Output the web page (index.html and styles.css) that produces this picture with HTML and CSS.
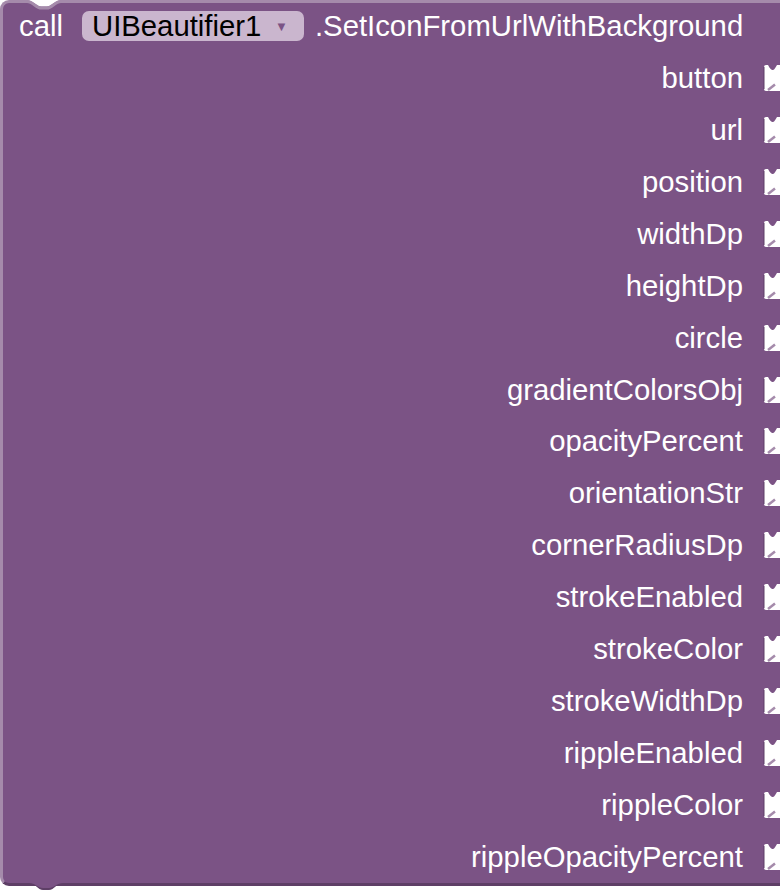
FILE: index.html
```html
<!DOCTYPE html>
<html>
<head>
<meta charset="utf-8">
<link rel="stylesheet" href="styles.css">
</head>
<body>
<div class="block">
  <svg class="notch-top" width="34" height="10" viewBox="0 0 34 10"><path d="M0,0 C6,0 9,6.5 14,6.5 L20,6.5 C25,6.5 28,0 34,0 Z" fill="#ffffff"/><path d="M0,1.5 C6,1.5 9,8 14,8 L20,8 C25,8 28,1.5 34,1.5" fill="none" stroke="#a58bab" stroke-width="3"/></svg>
  <div class="row head">
    <span class="call">call</span>
    <span class="dd">UIBeautifier1<span class="arrow">▼</span></span>
    <span class="method">.SetIconFromUrlWithBackground</span>
  </div>
  <div class="row"><span class="label">button</span><svg class="socket" viewBox="0 0 17 26"><path d="M3,0 L5,0 C7,4 8.5,5 10,5 C11.5,5 12.5,2 14,0 L17,0 L17,26 L3,26 Q1,26 1,24 L1,2 Q1,0 3,0 Z" fill="#fff"/><path d="M1,2 L1,24" stroke="#5e3f66" stroke-width="1"/><path d="M5,25 L12,19.5" stroke="#a58bab" stroke-width="2.5"/></svg></div>
  <div class="row"><span class="label">url</span><svg class="socket" viewBox="0 0 17 26"><path d="M3,0 L5,0 C7,4 8.5,5 10,5 C11.5,5 12.5,2 14,0 L17,0 L17,26 L3,26 Q1,26 1,24 L1,2 Q1,0 3,0 Z" fill="#fff"/><path d="M1,2 L1,24" stroke="#5e3f66" stroke-width="1"/><path d="M5,25 L12,19.5" stroke="#a58bab" stroke-width="2.5"/></svg></div>
  <div class="row"><span class="label">position</span><svg class="socket" viewBox="0 0 17 26"><path d="M3,0 L5,0 C7,4 8.5,5 10,5 C11.5,5 12.5,2 14,0 L17,0 L17,26 L3,26 Q1,26 1,24 L1,2 Q1,0 3,0 Z" fill="#fff"/><path d="M1,2 L1,24" stroke="#5e3f66" stroke-width="1"/><path d="M5,25 L12,19.5" stroke="#a58bab" stroke-width="2.5"/></svg></div>
  <div class="row"><span class="label">widthDp</span><svg class="socket" viewBox="0 0 17 26"><path d="M3,0 L5,0 C7,4 8.5,5 10,5 C11.5,5 12.5,2 14,0 L17,0 L17,26 L3,26 Q1,26 1,24 L1,2 Q1,0 3,0 Z" fill="#fff"/><path d="M1,2 L1,24" stroke="#5e3f66" stroke-width="1"/><path d="M5,25 L12,19.5" stroke="#a58bab" stroke-width="2.5"/></svg></div>
  <div class="row"><span class="label">heightDp</span><svg class="socket" viewBox="0 0 17 26"><path d="M3,0 L5,0 C7,4 8.5,5 10,5 C11.5,5 12.5,2 14,0 L17,0 L17,26 L3,26 Q1,26 1,24 L1,2 Q1,0 3,0 Z" fill="#fff"/><path d="M1,2 L1,24" stroke="#5e3f66" stroke-width="1"/><path d="M5,25 L12,19.5" stroke="#a58bab" stroke-width="2.5"/></svg></div>
  <div class="row"><span class="label">circle</span><svg class="socket" viewBox="0 0 17 26"><path d="M3,0 L5,0 C7,4 8.5,5 10,5 C11.5,5 12.5,2 14,0 L17,0 L17,26 L3,26 Q1,26 1,24 L1,2 Q1,0 3,0 Z" fill="#fff"/><path d="M1,2 L1,24" stroke="#5e3f66" stroke-width="1"/><path d="M5,25 L12,19.5" stroke="#a58bab" stroke-width="2.5"/></svg></div>
  <div class="row"><span class="label">gradientColorsObj</span><svg class="socket" viewBox="0 0 17 26"><path d="M3,0 L5,0 C7,4 8.5,5 10,5 C11.5,5 12.5,2 14,0 L17,0 L17,26 L3,26 Q1,26 1,24 L1,2 Q1,0 3,0 Z" fill="#fff"/><path d="M1,2 L1,24" stroke="#5e3f66" stroke-width="1"/><path d="M5,25 L12,19.5" stroke="#a58bab" stroke-width="2.5"/></svg></div>
  <div class="row"><span class="label">opacityPercent</span><svg class="socket" viewBox="0 0 17 26"><path d="M3,0 L5,0 C7,4 8.5,5 10,5 C11.5,5 12.5,2 14,0 L17,0 L17,26 L3,26 Q1,26 1,24 L1,2 Q1,0 3,0 Z" fill="#fff"/><path d="M1,2 L1,24" stroke="#5e3f66" stroke-width="1"/><path d="M5,25 L12,19.5" stroke="#a58bab" stroke-width="2.5"/></svg></div>
  <div class="row"><span class="label">orientationStr</span><svg class="socket" viewBox="0 0 17 26"><path d="M3,0 L5,0 C7,4 8.5,5 10,5 C11.5,5 12.5,2 14,0 L17,0 L17,26 L3,26 Q1,26 1,24 L1,2 Q1,0 3,0 Z" fill="#fff"/><path d="M1,2 L1,24" stroke="#5e3f66" stroke-width="1"/><path d="M5,25 L12,19.5" stroke="#a58bab" stroke-width="2.5"/></svg></div>
  <div class="row"><span class="label">cornerRadiusDp</span><svg class="socket" viewBox="0 0 17 26"><path d="M3,0 L5,0 C7,4 8.5,5 10,5 C11.5,5 12.5,2 14,0 L17,0 L17,26 L3,26 Q1,26 1,24 L1,2 Q1,0 3,0 Z" fill="#fff"/><path d="M1,2 L1,24" stroke="#5e3f66" stroke-width="1"/><path d="M5,25 L12,19.5" stroke="#a58bab" stroke-width="2.5"/></svg></div>
  <div class="row"><span class="label">strokeEnabled</span><svg class="socket" viewBox="0 0 17 26"><path d="M3,0 L5,0 C7,4 8.5,5 10,5 C11.5,5 12.5,2 14,0 L17,0 L17,26 L3,26 Q1,26 1,24 L1,2 Q1,0 3,0 Z" fill="#fff"/><path d="M1,2 L1,24" stroke="#5e3f66" stroke-width="1"/><path d="M5,25 L12,19.5" stroke="#a58bab" stroke-width="2.5"/></svg></div>
  <div class="row"><span class="label">strokeColor</span><svg class="socket" viewBox="0 0 17 26"><path d="M3,0 L5,0 C7,4 8.5,5 10,5 C11.5,5 12.5,2 14,0 L17,0 L17,26 L3,26 Q1,26 1,24 L1,2 Q1,0 3,0 Z" fill="#fff"/><path d="M1,2 L1,24" stroke="#5e3f66" stroke-width="1"/><path d="M5,25 L12,19.5" stroke="#a58bab" stroke-width="2.5"/></svg></div>
  <div class="row"><span class="label">strokeWidthDp</span><svg class="socket" viewBox="0 0 17 26"><path d="M3,0 L5,0 C7,4 8.5,5 10,5 C11.5,5 12.5,2 14,0 L17,0 L17,26 L3,26 Q1,26 1,24 L1,2 Q1,0 3,0 Z" fill="#fff"/><path d="M1,2 L1,24" stroke="#5e3f66" stroke-width="1"/><path d="M5,25 L12,19.5" stroke="#a58bab" stroke-width="2.5"/></svg></div>
  <div class="row"><span class="label">rippleEnabled</span><svg class="socket" viewBox="0 0 17 26"><path d="M3,0 L5,0 C7,4 8.5,5 10,5 C11.5,5 12.5,2 14,0 L17,0 L17,26 L3,26 Q1,26 1,24 L1,2 Q1,0 3,0 Z" fill="#fff"/><path d="M1,2 L1,24" stroke="#5e3f66" stroke-width="1"/><path d="M5,25 L12,19.5" stroke="#a58bab" stroke-width="2.5"/></svg></div>
  <div class="row"><span class="label">rippleColor</span><svg class="socket" viewBox="0 0 17 26"><path d="M3,0 L5,0 C7,4 8.5,5 10,5 C11.5,5 12.5,2 14,0 L17,0 L17,26 L3,26 Q1,26 1,24 L1,2 Q1,0 3,0 Z" fill="#fff"/><path d="M1,2 L1,24" stroke="#5e3f66" stroke-width="1"/><path d="M5,25 L12,19.5" stroke="#a58bab" stroke-width="2.5"/></svg></div>
  <div class="row"><span class="label">rippleOpacityPercent</span><svg class="socket" viewBox="0 0 17 26"><path d="M3,0 L5,0 C7,4 8.5,5 10,5 C11.5,5 12.5,2 14,0 L17,0 L17,26 L3,26 Q1,26 1,24 L1,2 Q1,0 3,0 Z" fill="#fff"/><path d="M1,2 L1,24" stroke="#5e3f66" stroke-width="1"/><path d="M5,25 L12,19.5" stroke="#a58bab" stroke-width="2.5"/></svg></div>
  <svg class="tab-bottom" width="34" height="9" viewBox="0 0 34 9"><path d="M0,0 C6,0 9,7 14,7 L20,7 C25,7 28,0 34,0 Z" fill="#5e3f66"/><path d="M0,0 C6,0 9,5 14,5 L20,5 C25,5 28,0 34,0 Z" fill="#7b5385"/></svg>
</div>
</body>
</html>
```

FILE: styles.css
```css
html, body {
  margin: 0;
  padding: 0;
  background: #ffffff;
  overflow: hidden;
  width: 780px;
  height: 892px;
}

.block {
  position: relative;
  box-sizing: border-box;
  width: 780px;
  height: 886px;
  background: #7b5385;
  border-left: 3px solid #a58bab;
  border-top: 3px solid #a58bab;
  border-bottom: 3px solid #5e3f66;
  border-top-left-radius: 9px;
  border-bottom-left-radius: 9px;
  display: flex;
  flex-direction: column;
  font-family: "Liberation Sans", Arial, sans-serif;
  font-size: 29.3px;
  color: #ffffff;
}

.notch-top {
  position: absolute;
  left: 24px;
  top: -3px;
}

.tab-bottom {
  position: absolute;
  left: 26px;
  bottom: -9px;
}

.row {
  height: 52px;
  display: flex;
  align-items: center;
  justify-content: flex-end;
}

.row.head {
  height: 47px;
  justify-content: flex-start;
  padding-left: 16px;
  padding-bottom: 2px;
}

.call {
  margin-right: 19px;
}

.dd {
  display: flex;
  align-items: center;
  box-sizing: border-box;
  width: 222px;
  height: 30px;
  padding-left: 10px;
  border-radius: 7px;
  background: #cab6ce;
  color: #000000;
  margin-right: 11px;
}

.arrow {
  font-size: 13px;
  color: #7b5385;
  margin-left: auto;
  margin-right: 16px;
}

.label {
  margin-right: 20px;
}

.socket {
  width: 17px;
  height: 26px;
  flex: none;
}
```
